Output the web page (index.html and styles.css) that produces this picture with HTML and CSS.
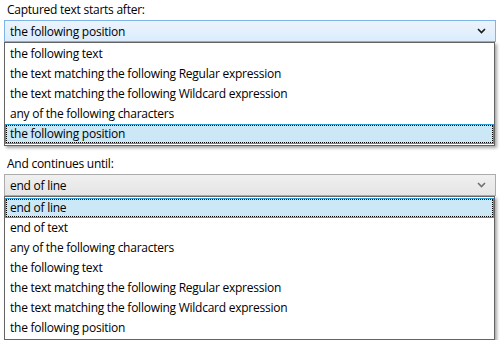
FILE: index.html
```html
<!DOCTYPE html>
<html lang="en">
<head>
    <meta charset="UTF-8">
    <title>Capture settings</title>
    <link rel="stylesheet" href="styles.css">
</head>
<body>

    <div class="field-label first">Captured text starts after:</div>
    <div class="combo open">
        <span class="combo-value">the following position</span>
        <svg class="chevron" width="9" height="6" viewBox="0 0 9 6"><path d="M1 1 L4.5 4.5 L8 1" fill="none" stroke="#1a1a1a" stroke-width="1.6"/></svg>
    </div>
    <ul class="drop-list">
        <li>the following text</li>
        <li>the text matching the following Regular expression</li>
        <li>the text matching the following Wildcard expression</li>
        <li>any of the following characters</li>
        <li class="selected"><span>the following position</span></li>
    </ul>

    <div class="field-label second">And continues until:</div>
    <div class="combo">
        <span class="combo-value">end of line</span>
        <svg class="chevron" width="9" height="6" viewBox="0 0 9 6"><path d="M1 1 L4.5 4.5 L8 1" fill="none" stroke="#707070" stroke-width="1.6"/></svg>
    </div>
    <ul class="drop-list">
        <li class="selected"><span>end of line</span></li>
        <li>end of text</li>
        <li>any of the following characters</li>
        <li>the following text</li>
        <li>the text matching the following Regular expression</li>
        <li>the text matching the following Wildcard expression</li>
        <li>the following position</li>
    </ul>

</body>
</html>
```

FILE: styles.css
```css
body {
    font-family: "Open Sans", "Noto Sans", Arial, sans-serif;
    font-size: 12px;
    letter-spacing: -0.25px;
    color: #000;
    background-color: #fff;
    margin: 0;
    padding: 0;
}

.field-label {
    height: 20px;
    line-height: 20px;
    padding-left: 7px;
}

.field-label.second {
    margin-top: 8px;
}

.combo {
    height: 20px;
    margin: 0 4px;
    border: 1px solid #acacac;
    background: linear-gradient(#f0f0f0, #e5e5e5);
    display: flex;
    align-items: center;
    justify-content: space-between;
    padding: 0 9px 0 5px;
}

.combo.open {
    border-color: #7eb4ea;
    background: linear-gradient(#ecf4fc, #dcecfc);
}

.drop-list {
    list-style: none;
    margin: 0 5px 0 4px;
    padding: 1px 0;
    border: 1px solid #646464;
    background-color: #fff;
    box-shadow: 2px 2px 3px rgba(0, 0, 0, 0.35);
}

.drop-list li {
    height: 20px;
    line-height: 20px;
    padding-left: 5px;
}

.drop-list li.selected {
    background-color: #cce8f7;
    border: 1px solid #26a0da;
    padding: 0;
    height: 18px;
    line-height: 18px;
}

.drop-list li.selected span {
    display: block;
    height: 16px;
    line-height: 16px;
    border: 1px dotted #000;
    padding-left: 3px;
}
```
